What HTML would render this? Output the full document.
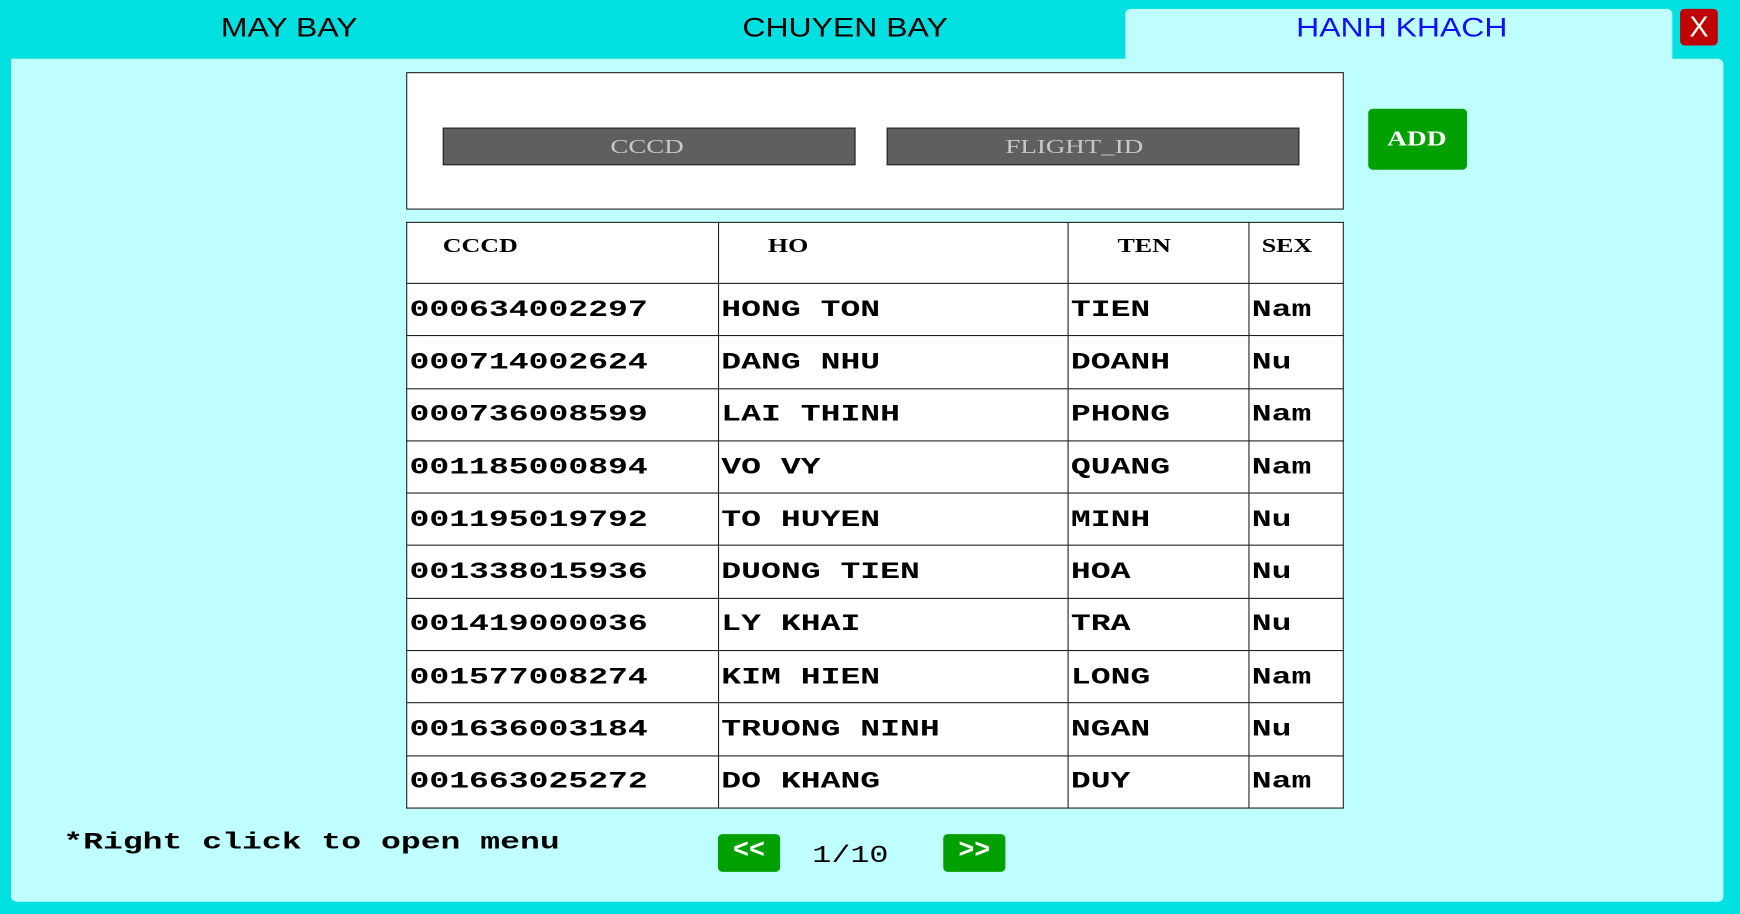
<!DOCTYPE html>
<html><head><meta charset="utf-8"><style>
html,body{margin:0;padding:0;width:1740px;height:914px;overflow:hidden;background:#00e0e0}
#s{position:absolute;left:0;top:0;width:1568px;height:824px;transform:scale(1.1097,1.1092);transform-origin:0 0;background:#00e0e0}
.a{position:absolute}
.x{display:inline-block;transform-origin:0 50%;white-space:pre}
.tab{font-family:"Liberation Sans",sans-serif;font-size:24px;top:12px;color:#000;white-space:pre}
.tab .x{transform:scaleX(1.2)}
.m{font-family:"Liberation Mono",monospace;font-weight:bold;font-size:21px;color:#000;white-space:pre}
.m .x,td .x{transform:scaleX(1.42)}
table{border-collapse:collapse;position:absolute;left:366px;top:200px;width:845px;background:#fff}
td{border:1.5px solid #222;padding:2px 0 0 2px;height:44.3px;font-family:"Liberation Mono",monospace;font-weight:bold;font-size:21px;white-space:pre;vertical-align:middle}
tr.h td{height:44px;vertical-align:top;padding-top:10px;font-family:"Liberation Serif",serif;font-size:18px}
tr.h td .x{transform:scaleX(1.3)}
.inp{background:#5f5f5f;border:1.5px solid #222;height:32px;top:115px;color:#c8c8c8;font-family:"Liberation Serif",serif;font-size:18px;line-height:32px}
.inp .x{transform:scaleX(1.35)}
.gb{background:#00a000;border-radius:4px;color:#fff;font-family:"Liberation Mono",monospace;font-weight:bold;font-size:24px;text-align:center}
</style></head><body><div id="s">
<div class="a tab" style="left:199px"><span class="x">MAY BAY</span></div>
<div class="a tab" style="left:669px"><span class="x">CHUYEN BAY</span></div>
<div class="a" style="left:1014px;top:8px;width:493px;height:60px;background:#bfffff;border-radius:5px 5px 0 0"></div>
<div class="a tab" style="left:1168px;color:#1010ff"><span class="x">HANH KHACH</span></div>
<div class="a" style="left:1514px;top:8px;width:34px;height:33px;background:#c00000;border-radius:4px;color:#fff;font-family:'Liberation Sans',sans-serif;font-size:26px;text-align:center;line-height:33px">X</div>
<div class="a" style="left:10px;top:53px;width:1543px;height:760px;background:#bfffff;border-radius:0 5px 5px 5px"></div>
<div class="a" style="left:366px;top:65px;width:843px;height:122px;background:#fff;border:1.5px solid #222"></div>
<div class="a inp" style="left:399px;width:370px"><span class="x" style="margin-left:150px">CCCD</span></div>
<div class="a inp" style="left:799px;width:370px"><span class="x" style="margin-left:106px">FLIGHT_ID</span></div>
<div class="a gb" style="left:1233px;top:98px;width:89px;height:55px;line-height:55px;font-family:'Liberation Serif',serif;font-size:19px;text-align:left"><span class="x" style="margin-left:17px;transform:scaleX(1.3)">ADD</span></div>
<table>
<colgroup><col style="width:281px"><col style="width:316px"><col style="width:163px"><col style="width:85px"></colgroup>
<tr class="h"><td style="padding-left:32px"><span class="x">CCCD</span></td><td style="padding-left:44px"><span class="x">HO</span></td><td style="padding-left:44px"><span class="x">TEN</span></td><td style="padding-left:11px"><span class="x">SEX</span></td></tr>
<tr><td><span class="x">000634002297</span></td><td><span class="x">HONG TON</span></td><td><span class="x">TIEN</span></td><td><span class="x">Nam</span></td></tr>
<tr><td><span class="x">000714002624</span></td><td><span class="x">DANG NHU</span></td><td><span class="x">DOANH</span></td><td><span class="x">Nu</span></td></tr>
<tr><td><span class="x">000736008599</span></td><td><span class="x">LAI THINH</span></td><td><span class="x">PHONG</span></td><td><span class="x">Nam</span></td></tr>
<tr><td><span class="x">001185000894</span></td><td><span class="x">VO VY</span></td><td><span class="x">QUANG</span></td><td><span class="x">Nam</span></td></tr>
<tr><td><span class="x">001195019792</span></td><td><span class="x">TO HUYEN</span></td><td><span class="x">MINH</span></td><td><span class="x">Nu</span></td></tr>
<tr><td><span class="x">001338015936</span></td><td><span class="x">DUONG TIEN</span></td><td><span class="x">HOA</span></td><td><span class="x">Nu</span></td></tr>
<tr><td><span class="x">001419000036</span></td><td><span class="x">LY KHAI</span></td><td><span class="x">TRA</span></td><td><span class="x">Nu</span></td></tr>
<tr><td><span class="x">001577008274</span></td><td><span class="x">KIM HIEN</span></td><td><span class="x">LONG</span></td><td><span class="x">Nam</span></td></tr>
<tr><td><span class="x">001636003184</span></td><td><span class="x">TRUONG NINH</span></td><td><span class="x">NGAN</span></td><td><span class="x">Nu</span></td></tr>
<tr><td><span class="x">001663025272</span></td><td><span class="x">DO KHANG</span></td><td><span class="x">DUY</span></td><td><span class="x">Nam</span></td></tr>
</table>
<div class="a m" style="left:57px;top:749px"><span class="x">*Right click to open menu</span></div>
<div class="a gb" style="left:647px;top:752px;width:56px;height:34px;line-height:32px">&lt;&lt;</div>
<div class="a" style="left:732px;top:759px;font-family:'Liberation Mono',monospace;font-size:22px"><span class="x" style="transform:scaleX(1.3)">1/10</span></div>
<div class="a gb" style="left:850px;top:752px;width:56px;height:34px;line-height:32px">&gt;&gt;</div>
</div></body></html>
